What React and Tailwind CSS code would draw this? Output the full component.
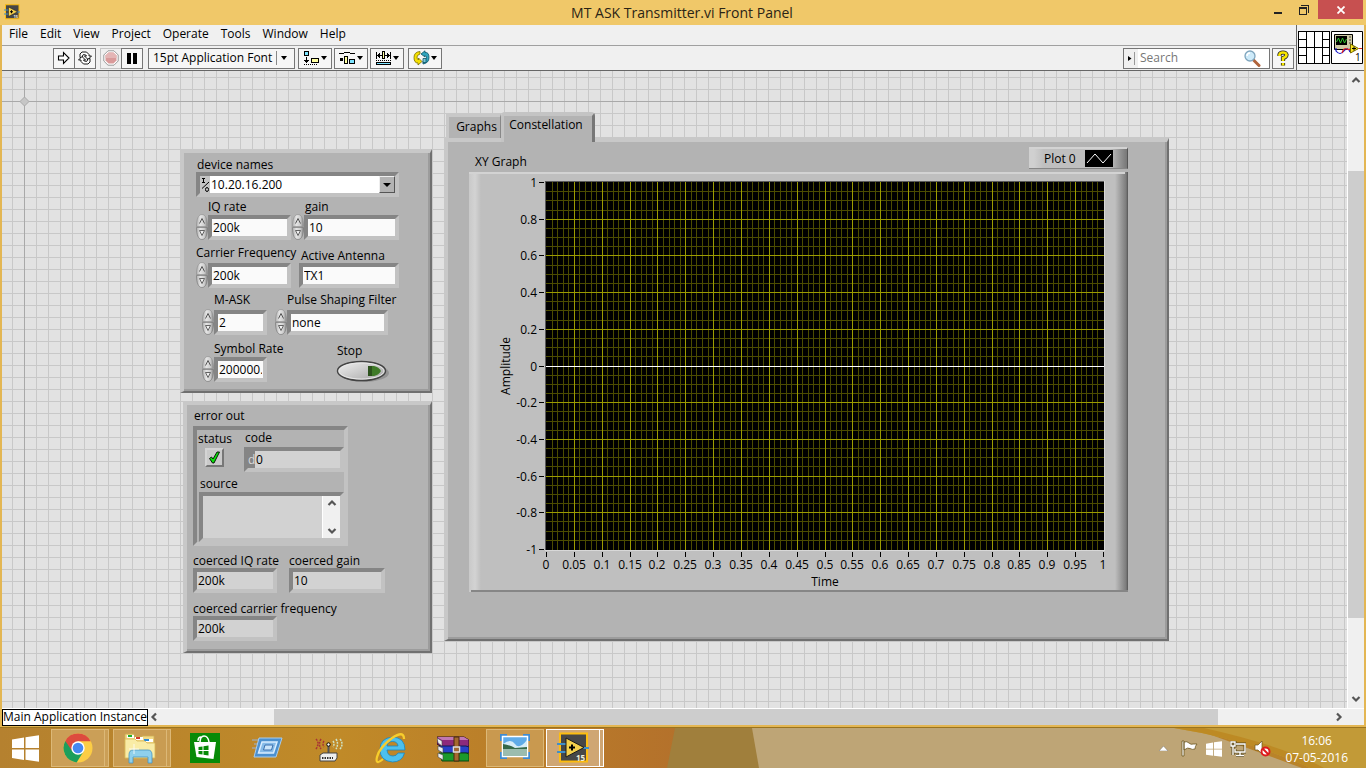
import React from "react";

const TEXT = "font-['Open_Sans','Noto_Sans',sans-serif]";
const RAISED =
  "bg-[#b3b3b3] border-t-4 border-l-4 border-r-2 border-b-2 border-t-[#c8c8c8] border-l-[#c8c8c8] border-r-[#707070] border-b-[#707070] shadow-[inset_-2px_-2px_0_#9c9c9c]";
const SUNKEN =
  "border-4 border-t-[#858585] border-l-[#858585] border-r-[#c2c2c2] border-b-[#c2c2c2]";

function Label({ htmlFor, className = "", children }) {
  return (
    <label htmlFor={htmlFor} className={`block whitespace-nowrap leading-[15px] ${className}`}>
      {children}
    </label>
  );
}

function Field({ id, value, readOnly, className = "" }) {
  return (
    <input
      id={id}
      type="text"
      defaultValue={value}
      readOnly={readOnly}
      className={`block h-[25px] min-w-0 rounded-none px-px leading-4 outline-none ${SUNKEN} ${
        readOnly ? "bg-[#d2d2d2]" : "bg-[#fafafa]"
      } ${className}`}
    />
  );
}

function Spinner({ label }) {
  return (
    <button type="button" aria-label={`Step ${label}`} className="h-[26px] w-3 shrink-0">
      <svg width="12" height="26" viewBox="0 0 12 26" aria-hidden="true">
        <defs>
          <linearGradient id="spin" x1="0" x2="1" y1="0" y2="0">
            <stop offset="0" stopColor="#b0b0b0" />
            <stop offset=".35" stopColor="#e4e4e4" />
            <stop offset=".7" stopColor="#cfcfcf" />
            <stop offset="1" stopColor="#858585" />
          </linearGradient>
        </defs>
        <path d="M.5 12.500C.5 5 2.500.500 6 .500s5.500 4.500 5.500 12z" fill="url(#spin)" stroke="#8c8c8c" strokeWidth=".6" />
        <path d="M.5 13.500c0 7.500 2 12 5.500 12s5.500-4.500 5.500-12z" fill="url(#spin)" stroke="#6f6f6f" strokeWidth=".6" />
        <path d="M3.500 9.500 6 4.500l2.500 5" fill="none" stroke="#555" />
        <path d="M3.500 16.500h5L6 21.500z" fill="#f0f0f0" stroke="#555" strokeWidth=".9" />
      </svg>
    </button>
  );
}

function Control({ id, label, value, spinner = true, box = "", width, labelClass = "" }) {
  return (
    <div className={box}>
      <Label htmlFor={id} className={labelClass}>
        {label}
      </Label>
      <div className="flex items-center">
        {spinner && <Spinner label={label} />}
        <Field id={id} value={value} className={width} />
      </div>
    </div>
  );
}

function Settings() {
  return (
    <section className={`flex h-[244px] w-[252px] flex-col pt-1 pl-3 ${RAISED}`}>
      <div>
        <Label htmlFor="device" className="pl-px">
          device names
        </Label>
        <div className={`flex h-[25px] w-[203px] bg-white ${SUNKEN}`}>
          <span className="grid w-[10px] shrink-0 place-items-center bg-[#c4c4c4]">
            <svg width="9" height="16" viewBox="0 0 9 16" fill="none" stroke="#000" aria-hidden="true">
              <path d="M1 1.500h3M2.500 1.500v4M1 5.500h3M1 11.500 8 5" />
              <ellipse cx="6" cy="12.500" rx="1.500" ry="2" />
            </svg>
          </span>
          <select id="device" className="min-w-0 flex-1 appearance-none bg-white pl-px leading-4 outline-none">
            <option>10.20.16.200</option>
          </select>
          <span className="grid w-4 shrink-0 place-items-center border border-t-[#eee] border-l-[#eee] border-r-[#555] border-b-[#555] bg-[#b3b3b3]">
            <svg width="8" height="4" viewBox="0 0 8 4" aria-hidden="true">
              <path d="M0 0h8L4 4z" />
            </svg>
          </span>
        </div>
      </div>
      <div className="mt-0.5 flex">
        <Control id="iq" label="IQ rate" value="200k" box="w-[95px]" width="w-[83px]" labelClass="pl-3" />
        <div className="ml-px">
          <Control id="gain" label="gain" value="10" width="w-[95px]" labelClass="pl-[13px]" />
        </div>
      </div>
      <div className="mt-[5px] flex items-end">
        <Control id="carrier" label="Carrier Frequency" value="200k" box="w-[95px]" width="w-[83px]" labelClass="mb-0.5" />
        <div className="ml-2">
          <Control id="antenna" label="Active Antenna" value="TX1" spinner={false} width="w-[100px]" labelClass="pl-0.5" />
        </div>
      </div>
      <div className="mt-1 ml-1.5 flex items-end">
        <Control id="mask" label="M-ASK" value="2" box="w-[65px]" width="w-[53px]" labelClass="pl-3 mb-0.5" />
        <div className="ml-2">
          <Control id="pulse" label="Pulse Shaping Filter" value="none" width="w-[101px]" labelClass="pl-3 mb-0.5" />
        </div>
      </div>
      <div className="mt-1.5 ml-1.5 flex items-end">
        <Control id="symbol" label="Symbol Rate" value="200000.000" box="w-[65px]" width="w-[53px]" labelClass="pl-3" />
        <div className="ml-[68px]">
          <Label htmlFor="stop" className="pl-0.5">
            Stop
          </Label>
          <button id="stop" type="button" aria-label="Stop" className="block h-6 w-14">
            <svg width="56" height="24" viewBox="0 0 56 24" aria-hidden="true">
              <defs>
                <linearGradient id="stopFill" x1="0" x2="1" y1="0" y2="1">
                  <stop offset="0" stopColor="#f2f2f2" />
                  <stop offset="1" stopColor="#a2a2a2" />
                </linearGradient>
              </defs>
              <ellipse cx="29" cy="15" rx="25" ry="9" fill="#888" opacity=".7" />
              <ellipse cx="26.500" cy="13" rx="24" ry="9.500" fill="url(#stopFill)" stroke="#444" strokeWidth="1.500" />
              <ellipse cx="26.500" cy="13" rx="22.500" ry="8" fill="none" stroke="#e8e8e8" />
              <path d="M33 8h6q5 1 7 5-2 4-7 5h-6z" fill="#3f7a28" />
              <path d="M33 8h4v10h-4z" fill="#2c521d" />
            </svg>
          </button>
        </div>
      </div>
    </section>
  );
}

function ErrorOut() {
  return (
    <section className={`ml-[3px] flex h-[252px] w-[249px] flex-col pt-[3px] pl-[6px] ${RAISED}`}>
      <h2 className="pl-px leading-[15px]">error out</h2>
      <div className={`mt-[3px] h-[120px] w-[155px] ${SUNKEN}`}>
        <div className="flex">
          <div className="w-12 pt-px">
            <Label htmlFor="status" className="pl-px">
              status
            </Label>
            <div className="relative mt-0.5 ml-2 size-[19px]">
              <input
                id="status"
                type="checkbox"
                defaultChecked
                className="block size-[19px] appearance-none border-2 border-t-[#d4d4d4] border-l-[#d4d4d4] border-r-[#777] border-b-[#777] bg-[#cacaca]"
              />
              <svg className="pointer-events-none absolute inset-0" width="19" height="19" viewBox="0 0 19 19" aria-hidden="true">
                <path d="M4.500 10.500 6.500 9l1.500 2 4-7h2.500l-1 2-4.500 9H7.500z" fill="#0be00b" stroke="#000" strokeWidth=".9" />
              </svg>
            </div>
          </div>
          <div>
            <Label htmlFor="code" className="pl-px">
              code
            </Label>
            <div className={`mt-0.5 flex h-[25px] w-[100px] bg-[#d2d2d2] ${SUNKEN}`}>
              <span className="w-[7px] bg-[#858585] text-right leading-[17px] text-[#d8d8d8]">d</span>
              <input id="code" readOnly defaultValue="0" className="min-w-0 flex-1 bg-[#d2d2d2] pl-px leading-4 outline-none" />
            </div>
          </div>
        </div>
        <Label htmlFor="source" className="mt-1 pl-[3px]">
          source
        </Label>
        <div className={`mt-px ml-0.5 flex h-[50px] w-[145px] bg-[#d2d2d2] ${SUNKEN}`}>
          <textarea id="source" readOnly className="min-w-0 flex-1 resize-none bg-transparent outline-none" />
          <span className="flex w-[18px] flex-col items-center justify-between border-l border-white bg-[#f0f0f0] py-0.5">
            <Chevron dir="up" />
            <Chevron dir="down" />
          </span>
        </div>
      </div>
      <div className="mt-[7px] flex">
        <div className="w-[84px]">
          <Label htmlFor="ciq">coerced IQ rate</Label>
          <Field id="ciq" value="200k" readOnly className="w-[84px]" />
        </div>
        <div className="ml-3">
          <Label htmlFor="cgain">coerced gain</Label>
          <Field id="cgain" value="10" readOnly className="w-24" />
        </div>
      </div>
      <div className="mt-2">
        <Label htmlFor="ccarrier">coerced carrier frequency</Label>
        <Field id="ccarrier" value="200k" readOnly className="w-[84px]" />
      </div>
    </section>
  );
}

const CHEVRONS = {
  up: "M1.500 7 5 3.500 8.500 7",
  down: "M1.500 3 5 6.500 8.500 3",
  left: "M7 1.500 3.500 5 7 8.500",
  right: "M3 1.500 6.500 5 3 8.500",
};

function Chevron({ dir }) {
  return (
    <svg width="10" height="10" viewBox="0 0 10 10" fill="none" stroke="#555" strokeWidth="2.200" aria-hidden="true">
      <path d={CHEVRONS[dir]} />
    </svg>
  );
}

function Chart() {
  const px = (v) => 77 + Math.round(v * 557);
  const py = (v) => 10 + Math.round(((1 - v) / 2) * 367);
  const xs = Array.from({ length: 101 }, (_, i) => i);
  const ys = Array.from({ length: 41 }, (_, i) => i);
  const fmt = (n) => String(Number(n.toFixed(2)));
  return (
    <svg width="659" height="420" viewBox="0 0 659 420" fontSize="12" className="block" role="img" aria-label="XY Graph">
      <defs>
        <linearGradient id="bandL" x1="0" x2="1" y1="0" y2="0">
          <stop offset="0" stopColor="#c9c9c9" />
          <stop offset=".5" stopColor="#d3d3d3" />
          <stop offset="1" stopColor="#bfbfbf" />
        </linearGradient>
        <linearGradient id="bandR" x1="0" x2="1" y1="0" y2="0">
          <stop offset="0" stopColor="#bfbfbf" />
          <stop offset=".85" stopColor="#7c7c7c" />
          <stop offset="1" stopColor="#555" />
        </linearGradient>
      </defs>
      <rect width="659" height="420" fill="#bfbfbf" />
      <rect width="12" height="420" fill="url(#bandL)" />
      <rect x="646" width="13" height="420" fill="url(#bandR)" />
      <rect width="656" height="2" fill="#d3d3d3" />
      <rect x="2" y="418" width="657" height="2" fill="#868686" />
      <g shapeRendering="crispEdges">
        <rect x="76" y="9" width="560" height="370" fill="#d8d8d8" />
        <rect x="76" y="9" width="559" height="369" fill="#5a5a5a" />
        <rect x="77" y="10" width="558" height="368" fill="#000" />
        {xs.map((i) => i % 5 !== 0 && <rect key={i} x={px(i / 100)} y="10" width="1" height="368" fill="#4c4c00" />)}
        {ys.map((i) => i % 4 !== 0 && <rect key={i} x="77" y={py(1 - i / 20)} width="558" height="1" fill="#4c4c00" />)}
        {xs.map((i) => i % 5 === 0 && i > 0 && i < 100 && <rect key={i} x={px(i / 100)} y="10" width="1" height="368" fill="#9b9b00" />)}
        {ys.map((i) => i % 4 === 0 && i > 0 && i < 40 && <rect key={i} x="77" y={py(1 - i / 20)} width="558" height="1" fill="#9b9b00" />)}
        <rect x="77" y={py(0)} width="558" height="1" fill="#fff" />
        {xs.map((i) => i % 5 === 0 && <rect key={i} x={px(i / 100)} y="380" width="1" height="5" fill="#000" />)}
        {ys.map((i) => i % 4 === 0 && <rect key={i} x="70" y={py(1 - i / 20)} width="5" height="1" fill="#000" />)}
      </g>
      {xs.map(
        (i) =>
          i % 5 === 0 && (
            <text key={i} x={px(i / 100)} y="397" textAnchor="middle">
              {fmt(i / 100)}
            </text>
          )
      )}
      {ys.map(
        (i) =>
          i % 4 === 0 && (
            <text key={i} x="68" y={py(1 - i / 20) + 5} textAnchor="end">
              {fmt(1 - i / 20)}
            </text>
          )
      )}
      <text x="356" y="414" textAnchor="middle">
        Time
      </text>
      <text transform="translate(41 194) rotate(-90)" textAnchor="middle">
        Amplitude
      </text>
    </svg>
  );
}

function GraphTabs() {
  return (
    <section className="flex flex-col">
      <div role="tablist" className="flex h-[26px] items-start pl-0.5">
        <button
          role="tab"
          type="button"
          aria-selected="false"
          className="mt-0.5 h-6 w-[55px] border-t-3 border-r border-l-3 border-t-[#c8c8c8] border-r-[#888] border-l-[#c8c8c8] bg-[#b3b3b3] pb-0.5 pl-1 leading-4"
        >
          Graphs
        </button>
        <button
          role="tab"
          type="button"
          aria-selected="true"
          className="relative z-10 h-[30px] w-[94px] rounded-t-sm border-t-4 border-r-3 border-l-3 border-t-[#c4c4c4] border-r-[#777] border-l-[#c4c4c4] bg-[#b3b3b3] pr-1 pb-2 leading-4"
        >
          Constellation
        </button>
      </div>
      <div role="tabpanel" className={`h-[503px] w-[725px] pt-[5px] pr-[39px] pl-[21px] ${RAISED}`}>
        <div className="mb-[3px] flex h-[22px] items-center justify-between">
          <h2 className="pt-2 pl-1.5 leading-4">XY Graph</h2>
          <div className="flex h-[22px] w-[99px] items-center border-t-2 border-r border-b border-t-[#d3d3d3] border-r-[#555] border-b-[#868686] bg-linear-to-r from-[#d0d0d0] from-5% via-[#bfbfbf] via-15% to-[#bfbfbf] to-85% pl-[15px]">
            Plot 0
            <span className="ml-auto flex h-full items-center bg-linear-to-r from-[#bfbfbf] from-60% to-[#777] pr-[14px]">
              <svg width="28" height="17" viewBox="0 0 28 17" aria-hidden="true">
                <rect width="28" height="17" />
                <path d="m2 13 8-9 8 9 8-9" fill="none" stroke="#fff" />
              </svg>
            </span>
          </div>
        </div>
        <Chart />
      </div>
    </section>
  );
}

const TOOL = "flex h-[21px] items-center justify-center border border-[#767676] bg-[#f6f6f6]";

function Caret() {
  return (
    <svg width="6" height="4" viewBox="0 0 6 4" aria-hidden="true">
      <path d="M0 0h6L3 4z" />
    </svg>
  );
}

function Toolbar() {
  return (
    <div className="flex h-[25px] items-center border-b border-[#666] bg-[#f0f0f0] pl-[51px]">
      <button type="button" aria-label="Run" className={`w-[22px] ${TOOL}`}>
        <svg width="14" height="14" viewBox="0 0 14 14" fill="#fff" stroke="#000" strokeWidth="1.100" aria-hidden="true">
          <path d="M1.500 5h5V1.500L12 7l-5.500 5.500V9h-5z" />
        </svg>
      </button>
      <button type="button" aria-label="Run continuously" className={`-ml-px w-[22px] ${TOOL}`}>
        <svg width="16" height="14" viewBox="0 0 16 14" fill="#fff" stroke="#000" strokeWidth=".9" aria-hidden="true">
          <path d="M3 6.500V3L5 1h4.500L12 3.500V5h2.500L11 8.500 7.500 5H9.500L8.500 3.800H6L5.500 4.500V6.500z" />
          <path d="M13 7.500V11l-2 2H6.500L4 10.500V9H1.500L5 5.500 8.500 9H6.500l1 1.200H10l.5-.7V8z" />
        </svg>
      </button>
      <button type="button" aria-label="Abort" className="ml-1 flex h-[21px] w-[22px] items-center justify-center border border-[#c4c4c4] bg-[#f0f0f0]">
        <svg width="16" height="16" viewBox="0 0 16 16" aria-hidden="true">
          <path d="M5 .8h6L15.200 5v6L11 15.200H5L.8 11V5z" fill="#fff" stroke="#999" />
          <path d="M5.500 2.500h5l3 3v5l-3 3h-5l-3-3v-5z" fill="#d99a9a" />
          <path d="M5.500 2.500h5l3 3V8h-11V5.500z" fill="#e4b5b5" />
        </svg>
      </button>
      <button type="button" aria-label="Pause" className={`-ml-px w-[22px] ${TOOL}`}>
        <svg width="10" height="11" viewBox="0 0 10 11" aria-hidden="true">
          <path d="M0 0h4v11H0zM6 0h4v11H6z" />
        </svg>
      </button>
      <div className={`ml-[5px] w-[147px] ${TOOL}`}>
        <select aria-label="Font" className="h-full min-w-0 flex-1 appearance-none pl-1 outline-none">
          <option>15pt Application Font</option>
        </select>
        <span className="mr-1 h-[14px] border-l border-[#888]" />
        <span className="mr-[7px] flex">
          <Caret />
        </span>
      </div>
      <button type="button" aria-label="Align objects" className={`ml-[3px] w-[34px] gap-px ${TOOL}`}>
        <svg width="17" height="14" viewBox="0 0 17 14" shapeRendering="crispEdges" aria-hidden="true">
          <rect x="1.500" y=".5" width="4" height="4" fill="#7de4ff" stroke="#000" />
          <path d="M3 6h1v3H3zM1 9h5v1H5v1H4v1H3v-1H2v-1H1z" />
          <path d="M1 13.500h14" stroke="#000" strokeDasharray="1 1" />
          <rect x="8.500" y="7.500" width="7" height="4" fill="#ffffa0" stroke="#000" />
        </svg>
        <Caret />
      </button>
      <button type="button" aria-label="Distribute objects" className={`ml-0.5 w-[34px] gap-px ${TOOL}`}>
        <svg width="17" height="14" viewBox="0 0 17 14" shapeRendering="crispEdges" aria-hidden="true">
          <path d="M0 3V2h5V1h6v1h5v1h-5V2H5v1zM1 7h3v3H1z" />
          <rect x="5.500" y="5.500" width="3" height="7" fill="#ffffa0" stroke="#000" />
          <rect x="10.500" y="8.500" width="5" height="4" fill="#7de4ff" stroke="#000" />
        </svg>
        <Caret />
      </button>
      <button type="button" aria-label="Resize objects" className={`ml-0.5 w-[34px] gap-px ${TOOL}`}>
        <svg width="17" height="14" viewBox="0 0 17 14" shapeRendering="crispEdges" aria-hidden="true">
          <path d="M1 1h1v7H1zM15 1h1v7h-1zM2 4h1V3h1V2h1v5H4V6H3V5H2zM15 4h-1V3h-1V2h-1v5h1V6h1V5h1zM5 4h2v1H5zM10 4h2v1h-2z" />
          <rect x="7.500" y=".5" width="2" height="7" fill="#ffffa0" stroke="#000" />
          <path d="M1 9.500h15" stroke="#000" strokeDasharray="1 1" />
          <rect x="1.500" y="11" width="14" height="2.500" fill="#7de4ff" stroke="#000" />
        </svg>
        <Caret />
      </button>
      <button type="button" aria-label="Reorder" className={`ml-1 w-[34px] gap-px ${TOOL}`}>
        <svg width="17" height="16" viewBox="0 0 17 16" strokeWidth=".8" aria-hidden="true">
          <path d="M7 1.500Q1 2 1 7.500T5 13v2l4-3.500L5.500 8v2Q4 9 4 7t3-3z" fill="#f5e000" stroke="#7a6c00" />
          <path d="M10 14q6-1 6-6.500T12 2.500V.8L8 4l4 3V5.500q1.500 1 1.500 2.500T10 11z" fill="#2fa4bd" stroke="#0d5364" />
          <path d="M10 8.500h3v4h-3z" fill="#7ec8d8" stroke="#0d5364" />
        </svg>
        <Caret />
      </button>
      <div className="ml-auto flex h-[21px] w-[147px] items-center border border-[#767676] bg-white">
        <span className="flex h-full w-[14px] items-center bg-[#f0f0f0] pl-1">
          <svg width="7" height="13" viewBox="0 0 7 13" aria-hidden="true">
            <path d="M0 4v5l3.500-2.500z" />
            <path d="M6.500 0v13" stroke="#999" />
          </svg>
        </span>
        <input aria-label="Search" placeholder="Search" className="min-w-0 flex-1 pl-0.5 outline-none placeholder:text-[#777]" />
        <svg className="mr-2" width="17" height="17" viewBox="0 0 17 17" aria-hidden="true">
          <path d="m9.500 10 5.500 5.500" stroke="#b0643c" strokeWidth="3" strokeLinecap="round" />
          <circle cx="6" cy="6" r="5" fill="#cdeaf9" stroke="#7fa5bd" strokeWidth="1.300" />
          <path d="M3 6q0-3 3-3" fill="none" stroke="#fff" strokeWidth="1.500" />
        </svg>
      </div>
      <button type="button" aria-label="Help" className={`mr-0.5 ml-0.5 w-[22px] ${TOOL}`}>
        <svg width="12" height="17" viewBox="0 0 12 17" fill="none" aria-hidden="true">
          <path d="M2.500 6V4.500Q3 2.500 6 2.500t3.500 2.200Q9.500 7 6 8v3M6 13v2.500" stroke="#222" strokeWidth="4.200" />
          <path d="M2.500 6V4.500Q3 2.500 6 2.500t3.500 2.200Q9.500 7 6 8v3M6 13v2.500" stroke="#f7e600" strokeWidth="2.600" />
        </svg>
      </button>
    </div>
  );
}

function LabViewIcon({ size, label }) {
  return (
    <svg width={size} height={size} viewBox="0 0 32 32" role="img" aria-label={label}>
      <rect x="3" y="1.500" width="27" height="28" fill="#474747" stroke="#fdbd10" strokeWidth="2" />
      <path d="M0 12h10M0 20h10M26 16h6" stroke="#3f8fc9" strokeWidth="2" />
      <path d="M9 6v19l18-9.500z" fill="#f5d04c" stroke="#1a1a1a" />
      <path d="M12 15.500h6M15 12.500v6" stroke="#000" strokeWidth="2" />
      <text x="19" y="28.500" fontSize="8" fontWeight="700" fill="#f3f0dc">
        15
      </text>
    </svg>
  );
}

function Header() {
  return (
    <div className="flex bg-[#f0f0f0]">
      <div className="min-w-0 flex-1">
        <nav className="flex h-[21px] items-center gap-3 border-b border-[#a0a0a0] pl-[7px]">
          {["File", "Edit", "View", "Project", "Operate", "Tools", "Window", "Help"].map((m) => (
            <button key={m} type="button" className="pb-0.5 leading-4">
              {m}
            </button>
          ))}
        </nav>
        <Toolbar />
      </div>
      <div className="flex w-[68px] items-center gap-px border-b border-l border-[#666] pl-px">
        <svg width="32" height="33" viewBox="0 0 32 33" fill="#fff" stroke="#000" shapeRendering="crispEdges" aria-hidden="true">
          <path d="M.5.5h31v32H.5zM8.500.500v32M16.500.500v32M24.500.500v32M0 16.500h32M0 8.500h8M24 8.500h8M0 24.500h8M24 24.500h8" />
        </svg>
        <svg width="32" height="33" viewBox="0 0 32 33" aria-hidden="true">
          <path d="M.5.5h31v32H.5z" fill="#fff" stroke="#000" />
          <path d="M3.500 3.500h18v15h-18z" fill="#cfcaa6" stroke="#000" />
          <path d="M5 5h11v9H5z" />
          <path d="m5.500 11 2-4 2 5 2-5 2 5 2-4" fill="none" stroke="#2fc52f" />
          <path d="M18 6h2M18 9h2M18 12h2" stroke="#444" />
          <path d="M5 17v3q4 5 8 0t6 1" fill="none" stroke="#1212c8" strokeWidth="1.200" />
          <path d="M11 22q2-6 5-4t4-2M28 17.500h3" fill="none" stroke="#e02020" strokeWidth="1.200" />
          <path d="M19.500 13v9l8-4.500z" fill="#fbe620" stroke="#776b00" />
          <path d="M21 17.500h4M23 15.500v4" stroke="#000" />
          <text x="24" y="30" fontSize="10">
            1
          </text>
        </svg>
      </div>
    </div>
  );
}

function TitleBar() {
  return (
    <header className="flex h-[25px] items-start bg-[#f0c869]">
      <span className="pt-1 pl-1">
        <LabViewIcon size={16} label="LabVIEW" />
      </span>
      <h1 className="flex-1 pt-[3px] pl-[78px] text-center text-[14px] leading-5 text-[#2b2416]">
        MT ASK Transmitter.vi Front Panel
      </h1>
      <button type="button" aria-label="Minimize" className="grid h-5 w-6 place-items-center">
        <svg width="8" height="12" viewBox="0 0 8 12" aria-hidden="true">
          <path d="M0 8h8v2H0z" fill="#222" />
        </svg>
      </button>
      <button type="button" aria-label="Restore" className="grid h-[19px] w-7 place-items-center">
        <svg width="10" height="10" viewBox="0 0 10 10" fill="none" stroke="#222" shapeRendering="crispEdges" aria-hidden="true">
          <path d="M2 .5h7.500V8M.5 2.500h7v7h-7zM.5 3.500h7" />
        </svg>
      </button>
      <button type="button" aria-label="Close" className="mr-[3px] grid h-[19px] w-[45px] place-items-center bg-[#c75050]">
        <svg width="8" height="8" viewBox="0 0 8 8" stroke="#fff" strokeWidth="1.800" aria-hidden="true">
          <path d="m.5.5 7 7M7.500.500l-7 7" />
        </svg>
      </button>
    </header>
  );
}

function WindowsLogo({ size }) {
  return (
    <svg width={size} height={size} viewBox="0 0 27 27" fill="#fff" aria-hidden="true">
      <path d="M0 4.500 12 2.500V13H0zM13.500 2.300 27 .3V13H13.500zM0 14.500h12V25L0 23zM13.500 14.500H27v12.200l-13.500-2z" />
    </svg>
  );
}

function TaskIcon({ name }) {
  const p = { width: 32, height: 32, viewBox: "0 0 32 32", "aria-hidden": true };
  if (name === "Google Chrome")
    return (
      <svg {...p}>
        <circle cx="16" cy="16" r="14.500" fill="#fccd45" />
        <path d="M3.300 8.900A14.500 14.500 0 0 0 14.600 30.400L21.700 19.300 16 16z" fill="#1c9f5c" />
        <path d="M3.300 8.900A14.500 14.500 0 0 1 28.800 9.300H16L10.300 19.300z" fill="#dd4b3e" />
        <circle cx="16" cy="16" r="6.700" fill="#fff" />
        <circle cx="16" cy="16" r="5.300" fill="#4688f1" />
      </svg>
    );
  if (name === "File Explorer")
    return (
      <svg {...p}>
        <path d="M1 5V3q0-1 1-1h8v3h8V4h12v22H1z" fill="#f2da86" stroke="#cfae55" strokeWidth=".8" />
        <path d="M3 3h7v3H3zM11 5h8v3h-8zM20 7h9v3h-9z" fill="#fff" />
        <path d="M4 3h4v2H4z" fill="#1faf2f" />
        <path d="M12 5h4v2h-4z" fill="#d33d2c" />
        <path d="M20 7h5v2h-5z" fill="#2b8bd8" />
        <path d="M1 7h10l2 2h8l2 2h8v15H1z" fill="#f9eca6" stroke="#d9b857" strokeWidth=".8" />
        <path d="M5 31v-8q0-5 4-5h15q4 0 4 5v8h-4v-6H9v6z" fill="#8fd0ec" stroke="#4696c2" strokeWidth=".8" />
        <path d="M10 12v10M5 17h10" stroke="#fff" strokeWidth=".8" />
      </svg>
    );
  if (name === "Store")
    return (
      <svg {...p}>
        <path d="M1 1h30v30H1z" fill="#078a07" />
        <path d="M5 10h22l-2.500 17-17-2z" fill="#fff" />
        <path d="M11 11q0-7 4-7t5 6M9 9q0-4 3-4" fill="none" stroke="#fff" strokeWidth="1.500" />
        <path d="m9.500 15 4-.5V18h-4zM14.500 14.300l5-.7V18h-5zM9.500 19h4v3.500l-4-.5zM14.500 19h5v4.500l-5-.7z" fill="#078a07" />
      </svg>
    );
  if (name === "Run")
    return (
      <svg {...p}>
        <path d="M1 8h8M3 12h6M1 16h6" stroke="#98b3d4" />
        <path d="M8 6h23l-6 19H3z" fill="#4b90cf" stroke="#a9cdec" />
        <path d="M11 10h15l-3.500 11h-15z" fill="#86bbe8" stroke="#d9edff" strokeWidth="1.500" />
        <path d="M14 13h8l-1.500 5h-8z" fill="#cbe5fa" stroke="#3a6fae" />
      </svg>
    );
  if (name === "Wireless Router")
    return (
      <svg {...p}>
        <g fill="none" strokeWidth="1.500" strokeDasharray="2 1">
          <path d="M11 9q-2 3 0 6M8 7q-3 5 0 10M3 7q4 4 0 10" stroke="#a83434" />
          <path d="M20 9q2 3 0 6M23 7q3 5 0 10M27 7q4 5 0 10" stroke="#cfe3c4" />
        </g>
        <path d="M15.500 13v9" stroke="#555" strokeWidth="2" />
        <circle cx="15.500" cy="12.500" r="1.700" fill="#fff" stroke="#000" />
        <path d="m7 23 3-2h14v5l-2 3H7z" fill="#eee" stroke="#444" />
        <path d="M9 26h11" stroke="#333" strokeWidth="2" strokeDasharray="1.500 1" />
      </svg>
    );
  if (name === "Internet Explorer")
    return (
      <svg {...p}>
        <path
          d="M30 18H12q.5 6 6 6 3.500 0 5-3h6.500Q27 30 17.500 30 5 29 5 17.500T17.500 5Q30 5.500 30 18zM12 14h11q-.5-4.500-5.500-4.500T12 14z"
          fill="#4cc0ee"
          stroke="#1c85bd"
          strokeWidth=".8"
        />
        <path d="M8 27q-8 7-6-2T17 6Q29-2 29 7" fill="none" stroke="#f7cd2c" strokeWidth="2.300" />
      </svg>
    );
  if (name === "WinRAR")
    return (
      <svg {...p}>
        <path d="M0 5h27l5 3v6l-3 1H5L0 12z" fill="#8d2a7c" stroke="#2b0c26" />
        <path d="M0 5h27l5 3H5z" fill="#c077b2" />
        <path d="M2 14h27l3 1v6H5z" fill="#2940c8" stroke="#101a55" />
        <path d="M2 21h27l3 1v7H5z" fill="#1b9a2b" stroke="#0a4511" />
        <path d="m0 6 5 3v5l-4-3zM1 14l5 2v5l-5-3zM1 21l5 2v5l-5-3z" fill="#eee" stroke="#444" strokeWidth=".6" />
        <path d="M17 5h5v24h-5z" fill="#a5692f" stroke="#4a2b0e" />
        <path d="M16.500 15h6v5h-6z" fill="none" stroke="#ddd" strokeWidth="1.500" />
      </svg>
    );
  if (name === "Picture Viewer")
    return (
      <svg {...p}>
        <path d="M1 2h7v7H1zM24 2h7v7h-7zM1 20h7v7H1zM24 20h7v7h-7z" fill="#3f8bd0" />
        <path d="M3.500 4.500h25v20h-25z" fill="#5fabe8" stroke="#fff" strokeWidth="1.500" />
        <path d="M4 12q8-6 12 0t12-4v9H4z" fill="#d6ecf7" />
        <path d="M4 12q7 1 12 4l12-1v2H4z" fill="#35694a" />
        <path d="M4 17h24v7H4z" fill="#9bbcae" />
      </svg>
    );
  return <LabViewIcon size={32} label="LabVIEW 2015" />;
}

const TASKS = [
  { name: "Google Chrome", open: "border-[#dcb877] bg-[#cb9f57]", stack: true },
  { name: "File Explorer", open: "border-[#dcb877] bg-[#c99c52]", stack: true },
  { name: "Store" },
  { name: "Run" },
  { name: "Wireless Router" },
  { name: "Internet Explorer" },
  { name: "WinRAR" },
  { name: "Picture Viewer", open: "border-[#dcb877] bg-[#c9994f]" },
  { name: "LabVIEW 2015", open: "border-white bg-[#cfa673]", stack: true },
];

function Taskbar() {
  return (
    <footer className="relative flex h-[41px] shrink-0 items-stretch overflow-hidden border-t border-[#9a7420] bg-[#b98329] text-white">
      <svg className="absolute inset-0 h-full w-full" viewBox="0 0 1366 40" preserveAspectRatio="none" aria-hidden="true">
        <defs>
          <linearGradient id="deskL" x1="0" x2="1" y1="0" y2="0">
            <stop offset="0" stopColor="#b5812f" />
            <stop offset=".5" stopColor="#c08a28" />
            <stop offset="1" stopColor="#b4712b" />
          </linearGradient>
        </defs>
        <rect width="680" height="40" fill="url(#deskL)" />
        <path d="M675 0h80l6 40h-94z" fill="#a07f3c" />
        <path d="M752 0h440l110 40H759z" fill="#bea576" />
        <path d="M1174 0h192v40h-56q-60-28-136-40z" fill="#c29a37" />
        <path d="M1174 0h30q80 18 120 40h-14q-60-28-136-40z" fill="#bd8a24" />
      </svg>
      <button type="button" aria-label="Start" className="relative grid w-[50px] place-items-center">
        <WindowsLogo size={27} />
      </button>
      <div className="relative flex">
        {TASKS.map((t) => (
          <div key={t.name} className={`flex h-10 ${t.name === "Picture Viewer" ? "w-[61px]" : "w-[62px]"}`}>
            <button
              type="button"
              aria-label={t.name}
              className={`my-px grid place-items-center border ${t.stack ? "ml-px w-[54px]" : "ml-0.5 w-[58px]"} ${t.open || "border-transparent"}`}
            >
              <TaskIcon name={t.name} />
            </button>
            {t.stack && <span className={`my-px w-1 border border-l-0 ${t.open}`} />}
          </div>
        ))}
      </div>
      <div className="relative ml-auto flex items-center pt-px pr-[18px]">
        <svg className="mr-[13px]" width="9" height="5" viewBox="0 0 9 5" aria-hidden="true">
          <path d="M0 5h9L4.500 0z" fill="#fff" stroke="#777" strokeWidth=".5" />
        </svg>
        <svg className="mr-2" width="17" height="17" viewBox="0 0 17 17" fill="#fff" stroke="#6b5520" strokeWidth=".8" aria-hidden="true">
          <path d="M1 1h2v15H1zM3 2q3-1 5 1t4 1h4q-2 2-2 5-3 1-5-.5T3 10z" />
        </svg>
        <span className="mr-2">
          <WindowsLogo size={16} />
        </span>
        <svg className="mr-2" width="16" height="16" viewBox="0 0 16 16" fill="none" aria-hidden="true">
          <path d="M6 3h9v8H5V8M10 11v3M6 14.500h8M1 1h4v4H1zM3 5v9" stroke="#5b4a1c" strokeWidth="3" />
          <path d="M6 3h9v8H5V8M10 11v3M6 14.500h8M1 1h4v4H1zM3 5v9" stroke="#fff" strokeWidth="1.400" />
        </svg>
        <svg width="17" height="17" viewBox="0 0 17 17" aria-hidden="true">
          <path d="M1 5h3l4-4v13l-4-4H1z" fill="#fff" stroke="#6b5520" strokeWidth=".7" />
          <circle cx="11.500" cy="11.500" r="4" fill="#fff" stroke="#dd1c1c" strokeWidth="2" />
          <path d="m8.500 8.500 6 6" stroke="#dd1c1c" strokeWidth="2" />
        </svg>
        <time dateTime="2016-05-07T16:06" className="ml-[14px] text-center leading-[17px]">
          16:06
          <br />
          07-05-2016
        </time>
      </div>
    </footer>
  );
}

export default function App() {
  return (
    <div className={`flex min-h-screen flex-col bg-[#f0c869] text-[12px] text-black ${TEXT}`}>
      <TitleBar />
      <main className="flex flex-1 flex-col border-x-2 border-b-2 border-[#e3b653]">
        <Header />
        <div className="flex flex-1">
          <div className="relative flex flex-1 items-start overflow-hidden bg-[#e2e2e2] bg-[linear-gradient(to_right,#c8c8c8_1px,transparent_1px),linear-gradient(to_bottom,#c8c8c8_1px,transparent_1px)] bg-[length:12px_12px] bg-[position:-2px_6px] pl-[178px]">
            <svg className="absolute inset-0 h-full w-full" aria-hidden="true">
              <path d="M22.500 0v2000M0 30.500h4000" stroke="#a9a9a9" />
              <path d="m22.500 26 4.500 4.500-4.500 4.500-4.500-4.500z" fill="#c6c6c6" stroke="#a9a9a9" />
            </svg>
            <div className="relative flex flex-col gap-2 pt-[78px]">
              <Settings />
              <ErrorOut />
            </div>
            <div className="relative ml-3 pt-[41px]">
              <GraphTabs />
            </div>
          </div>
          <div className="flex w-[17px] flex-col items-center border-l border-white bg-[#f0f0f0] py-1">
            <Chevron dir="up" />
            <span className="mt-[86px] h-[447px] w-full bg-[#cdcdcd]" />
            <span className="mt-auto flex">
              <Chevron dir="down" />
            </span>
          </div>
        </div>
        <div className="flex h-[17px] items-center border-t border-white bg-[#f0f0f0]">
          <button type="button" className="h-[17px] border border-black bg-white leading-[14px] whitespace-nowrap">
            Main Application Instance
          </button>
          <span className="ml-px flex">
            <Chevron dir="left" />
          </span>
          <span className="ml-[115px] h-full w-[944px] bg-[#cdcdcd]" />
          <span className="mr-5 ml-auto flex">
            <Chevron dir="right" />
          </span>
        </div>
      </main>
      <Taskbar />
    </div>
  );
}
